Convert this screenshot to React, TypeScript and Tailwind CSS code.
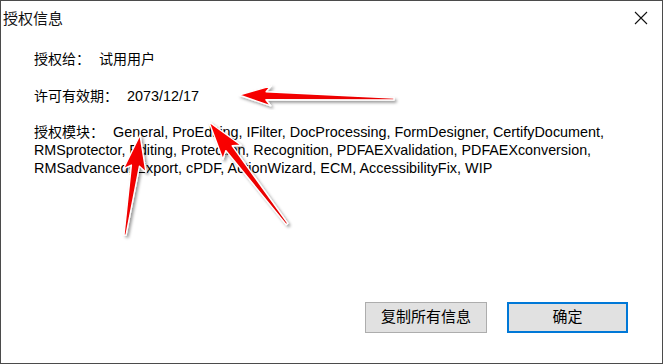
import React from "react";

type Pt = [number, number];

function arrowPoints(tail: Pt, tip: Pt, headLen: number, headW: number, shaftW: number, tailW: number): string {
  const dx = tip[0] - tail[0];
  const dy = tip[1] - tail[1];
  const len = Math.hypot(dx, dy);
  const ux = dx / len;
  const uy = dy / len;
  const nx = -uy;
  const ny = ux;
  const bx = tip[0] - ux * headLen;
  const by = tip[1] - uy * headLen;
  const back = 5;
  const pts: Pt[] = [
    [tail[0] + (nx * tailW) / 2, tail[1] + (ny * tailW) / 2],
    [bx + (nx * shaftW) / 2, by + (ny * shaftW) / 2],
    [bx - ux * back + (nx * headW) / 2, by - uy * back + (ny * headW) / 2],
    [tip[0], tip[1]],
    [bx - ux * back - (nx * headW) / 2, by - uy * back - (ny * headW) / 2],
    [bx - (nx * shaftW) / 2, by - (ny * shaftW) / 2],
    [tail[0] - (nx * tailW) / 2, tail[1] - (ny * tailW) / 2],
  ];
  return pts.map((p) => `${p[0].toFixed(1)},${p[1].toFixed(1)}`).join(" ");
}

const arrows = [
  arrowPoints([392, 97], [237, 93], 27, 20, 8, 2),
  arrowPoints([123, 233], [138, 133], 31, 23, 8, 2),
  arrowPoints([285, 222], [207, 120], 33, 23, 8, 2),
];

export default function App() {
  const font = { fontFamily: "'Liberation Sans', 'Noto Sans CJK SC', sans-serif" };
  return (
    <div
      className="relative w-[663px] h-[364px] bg-white border border-[#4b4b4b] flex flex-col text-black overflow-hidden"
      style={font}
    >
      <div className="h-[32px] flex items-center justify-between pl-[2px] pr-[14px] shrink-0">
        <span className="text-[15px] leading-none text-[#111]" style={{ fontFamily: "'Noto Sans CJK SC', sans-serif" }}>
          授权信息
        </span>
        <svg width="14" height="14" viewBox="0 0 14 14" className="mt-[1px]">
          <path d="M1 1 L13 13 M13 1 L1 13" stroke="#111" strokeWidth="1.1" fill="none" />
        </svg>
      </div>
      <div className="flex-1 flex flex-col pl-[33px] pt-[17px] text-[14px] leading-[18px]">
        <div>
          <span>授权给：</span>
          <span className="ml-[9px]">试用用户</span>
        </div>
        <div className="mt-[19px]">
          <span>许可有效期：</span>
          <span className="ml-[9px] text-[14.4px]">2073/12/17</span>
        </div>
        <div className="mt-[18px]">
          <span>授权模块：</span>
          <span className="ml-[9px] text-[14.4px]">General, ProEditing, IFilter, DocProcessing, FormDesigner, CertifyDocument,</span>
          <br />
          <span className="text-[14.3px]">RMSprotector, Editing, Protection, Recognition, PDFAEXvalidation, PDFAEXconversion,</span>
          <br />
          <span className="text-[14.4px]">RMSadvanced, Export, cPDF, ActionWizard, ECM, AccessibilityFix, WIP</span>
        </div>
      </div>
      <div className="flex justify-end gap-[20px] pr-[34px] pb-[30px] shrink-0">
        <button className="w-[122px] h-[31px] bg-[#e1e1e1] border border-[#adadad] text-[15px] flex items-center justify-center">
          复制所有信息
        </button>
        <button className="w-[121px] h-[31px] bg-[#e1e1e1] border-2 border-[#0078d7] text-[15px] flex items-center justify-center">
          确定
        </button>
      </div>
      <svg className="absolute left-0 top-0 pointer-events-none" width="663" height="364" viewBox="-1 -1 663 364">
        <defs>
          <filter id="sh" x="-20%" y="-20%" width="140%" height="140%">
            <feDropShadow dx="2" dy="2" stdDeviation="1.6" floodColor="#000" floodOpacity="0.4" />
          </filter>
          <linearGradient id="rg" x1="0" y1="0" x2="1" y2="1">
            <stop offset="0" stopColor="#ff0000" />
            <stop offset="1" stopColor="#e00000" />
          </linearGradient>
        </defs>
        {arrows.map((p, i) => (
          <polygon key={i} points={p} fill="url(#rg)" stroke="#ffffff" strokeWidth="1.4" strokeLinejoin="round" filter="url(#sh)" />
        ))}
      </svg>
    </div>
  );
}
